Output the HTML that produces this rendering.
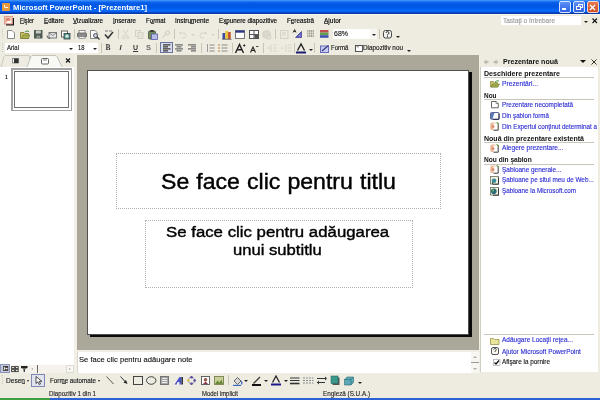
<!DOCTYPE html>
<html><head><meta charset="utf-8">
<style>
*{margin:0;padding:0;box-sizing:border-box}
html,body{width:600px;height:400px;overflow:hidden;background:#EEECE1;font-family:"Liberation Sans",sans-serif;position:relative}
.a{position:absolute}
.t{position:absolute;white-space:nowrap;transform-origin:0 0;line-height:1}
svg{position:absolute;overflow:visible}
.sep{position:absolute;width:1px;background:#C8C5B6}
.grip{position:absolute;width:1px;background:repeating-linear-gradient(#CAC8BA 0 1px,transparent 1px 2px)}
.arr{position:absolute;width:0;height:0;border-left:2px solid transparent;border-right:2px solid transparent;border-top:2px solid #222}
#wrap{position:absolute;left:0;top:0;width:600px;height:400px;overflow:hidden;filter:blur(0.35px)}
</style></head><body><div id="wrap">
<!-- TITLE BAR -->
<div class="a" style="left:0;top:0;width:600px;height:14px;background:linear-gradient(#4A9CFF 0,#2A80FA 1px,#0A60EA 2.5px,#0057E4 5px,#0058E6 8px,#0868F8 10px,#0A6AFA 11.2px,#0448C8 12.5px,#0A3AA8 13.5px,#8A9AD0 14px)"></div>
<div class="a" style="left:2px;top:3px;width:8px;height:8px;background:#E99A3C;border-radius:1px"></div>
<div class="a" style="left:4px;top:5px;width:4px;height:3px;border-left:1px solid #fff;border-bottom:1px solid #fff;border-radius:0 0 0 2px"></div>
<div class="a" style="left:559px;top:1px;width:12px;height:11.5px;background:linear-gradient(#5C8FF5,#2F63E3);border:1px solid #D8E4FA;border-radius:2px"></div>
<div class="a" style="left:562px;top:8px;width:4px;height:2px;background:#fff"></div>
<div class="a" style="left:573px;top:1px;width:12px;height:11.5px;background:linear-gradient(#5C8FF5,#2F63E3);border:1px solid #D8E4FA;border-radius:2px"></div>
<div class="a" style="left:577.5px;top:3.5px;width:5px;height:4.5px;border:1px solid #fff;border-top-width:1.5px"></div>
<div class="a" style="left:575.5px;top:5.5px;width:5px;height:4.5px;border:1px solid #fff;border-top-width:1.5px;background:#3A6CE4"></div>
<div class="a" style="left:586.5px;top:1px;width:12px;height:11.5px;background:linear-gradient(#E9794F,#D14E26);border:1px solid #F1D6CB;border-radius:2px"></div>
<svg style="left:589px;top:3.5px" width="7" height="7"><path d="M1 1L6 6M6 1L1 6" stroke="#fff" stroke-width="1.4"/></svg>

<!-- MENU BAR -->
<div class="a" style="left:0;top:14px;width:600px;height:1px;background:#F6F5F0"></div>
<div class="a" style="left:20px;top:23.3px;width:3.5px;height:0.8px;background:#555"></div><div class="a" style="left:44px;top:23.3px;width:3.5px;height:0.8px;background:#555"></div><div class="a" style="left:73px;top:23.3px;width:4px;height:0.8px;background:#555"></div><div class="a" style="left:113px;top:23.3px;width:2px;height:0.8px;background:#555"></div><div class="a" style="left:151px;top:23.3px;width:2.5px;height:0.8px;background:#555"></div><div class="a" style="left:190px;top:23.3px;width:4px;height:0.8px;background:#555"></div><div class="a" style="left:224px;top:23.3px;width:3.5px;height:0.8px;background:#555"></div><div class="a" style="left:291px;top:23.3px;width:3px;height:0.8px;background:#555"></div><div class="a" style="left:324px;top:23.3px;width:4px;height:0.8px;background:#555"></div>
<svg style="left:4px;top:16px" width="11" height="10"><rect x="2" y="2" width="8" height="7.5" fill="#1A1A1A"/><rect x="0.5" y="0.5" width="8" height="7.5" fill="#F1C8B8" stroke="#D89080" stroke-width="0.8"/><rect x="1.8" y="2" width="4" height="3.5" fill="#E08870"/><rect x="3" y="5" width="4" height="2" fill="#fff"/></svg>
<div class="a" style="left:501px;top:15.5px;width:80px;height:9.5px;background:#fff"></div>
<div class="arr" style="left:583.5px;top:21px"></div>
<svg style="left:591.5px;top:17.5px" width="6" height="6"><path d="M0.5 0.5L5 5M5 0.5L0.5 5" stroke="#111" stroke-width="1.1"/></svg>

<!-- TOOLBAR 1 -->
<div class="grip" style="left:2px;top:29px;height:10px"></div>
<!-- new -->
<svg style="left:7px;top:30px" width="8" height="9"><path d="M0.5 0.5H5L7.5 3V8.5H0.5Z" fill="#fff" stroke="#8A8A8A"/></svg>
<!-- open -->
<svg style="left:20px;top:30px" width="10" height="9"><path d="M0.5 2.5H4L5 3.5H8.5V8.5H0.5Z" fill="#C9C060" stroke="#7A7630" stroke-width="0.8"/><path d="M1.5 8.5L3 5H9.8L8.5 8.5Z" fill="#A7B04A" stroke="#6E7430" stroke-width="0.6"/><path d="M5 2Q7 0 9 1.5" stroke="#3C8A3C" fill="none" stroke-width="1"/></svg>
<!-- save -->
<svg style="left:34px;top:30px" width="9" height="9"><rect x="0" y="0" width="8.5" height="8.5" fill="#4E5A52"/><rect x="1.8" y="0.5" width="5" height="3" fill="#C8CCC6"/><rect x="2.5" y="5.5" width="3.5" height="3" fill="#8E968F"/></svg>
<!-- email -->
<svg style="left:47px;top:31px" width="10" height="8"><rect x="2" y="1.5" width="7.5" height="5.5" fill="#E4E4E4" stroke="#6E6E6E" stroke-width="0.9"/><path d="M2 1.5L5.8 4.5L9.5 1.5" fill="none" stroke="#6E6E6E" stroke-width="0.8"/><path d="M0 4.5Q0 7.5 3 7.5" fill="none" stroke="#555" stroke-width="1"/></svg>
<!-- permission -->
<svg style="left:61px;top:30px" width="10" height="10"><rect x="0.5" y="1" width="6" height="6" fill="#fff" stroke="#555" stroke-width="0.9"/><rect x="3" y="3.5" width="6" height="5.5" fill="#4A9A98" stroke="#3A3A3A" stroke-width="0.8"/><circle cx="6" cy="6.2" r="1.6" fill="#D8E8E0"/></svg>
<div class="sep" style="left:73.5px;top:29px;height:10px"></div>
<!-- print -->
<svg style="left:77px;top:30px" width="10" height="9"><rect x="2" y="0.5" width="6" height="3" fill="#fff" stroke="#777" stroke-width="0.8"/><rect x="0.5" y="3" width="9" height="4" rx="1" fill="#8C8C8C" stroke="#5A5A5A" stroke-width="0.8"/><rect x="2" y="6.5" width="6" height="2" fill="#E8E8E8" stroke="#777" stroke-width="0.6"/></svg>
<!-- print preview -->
<svg style="left:90px;top:30px" width="10" height="10"><path d="M0.5 0.5H5L7 2.5V8.5H0.5Z" fill="#fff" stroke="#777" stroke-width="0.9"/><circle cx="5.5" cy="5.5" r="2" fill="#C8CCE8" stroke="#444" stroke-width="0.9"/><path d="M7 7L9.5 9.5" stroke="#333" stroke-width="1.3"/></svg>
<!-- spelling -->
<svg style="left:104px;top:30px" width="10" height="9"><path d="M1 1H4M5 1H8" stroke="#777" stroke-width="1"/><path d="M1 4.5L4 8L9 2" fill="none" stroke="#333" stroke-width="1.5"/></svg>
<div class="sep" style="left:117.5px;top:29px;height:10px"></div>
<!-- cut disabled -->
<svg style="left:122px;top:30px" width="8" height="9"><path d="M1 0L6 7M6 0L1 7" stroke="#D4D2C6" stroke-width="1"/><circle cx="1.5" cy="7.5" r="1.2" fill="none" stroke="#D4D2C6"/><circle cx="5.5" cy="7.5" r="1.2" fill="none" stroke="#D4D2C6"/></svg>
<!-- copy disabled -->
<svg style="left:135px;top:30px" width="9" height="9"><rect x="0.5" y="0.5" width="5" height="6" fill="none" stroke="#D4D2C6"/><rect x="3" y="2.5" width="5" height="6" fill="#E6E4DA" stroke="#D4D2C6"/></svg>
<!-- paste -->
<svg style="left:148px;top:30px" width="10" height="10"><rect x="0.5" y="1" width="7" height="8" rx="1" fill="#6E8A5A" stroke="#4A5A3E" stroke-width="0.8"/><rect x="2.5" y="0" width="3" height="2" fill="#333"/><rect x="3.5" y="4" width="6" height="5.5" fill="#B8BCE8" stroke="#5A5EA8" stroke-width="0.8"/></svg>
<!-- format painter disabled -->
<svg style="left:161px;top:30px" width="10" height="9"><path d="M1 8L5 4M4 3L7 0.5L9 2.5L6.5 5Z" fill="none" stroke="#D4D2C6" stroke-width="1.1"/></svg>
<div class="sep" style="left:173.5px;top:29px;height:10px"></div>
<!-- undo/redo disabled -->
<svg style="left:179px;top:31px" width="8" height="7"><path d="M1 2H5Q7 2 7 4.5T5 7H3" fill="none" stroke="#D6D4C8" stroke-width="1"/><path d="M0 2L2 0V4Z" fill="#D6D4C8"/></svg>
<div class="arr" style="left:191px;top:34px;border-top-color:#D6D4C8"></div>
<svg style="left:199px;top:31px" width="8" height="7"><path d="M7 2H3Q1 2 1 4.5T3 7H5" fill="none" stroke="#D6D4C8" stroke-width="1"/><path d="M8 2L6 0V4Z" fill="#D6D4C8"/></svg>
<div class="arr" style="left:211px;top:34px;border-top-color:#D6D4C8"></div>
<div class="sep" style="left:217.5px;top:29px;height:10px"></div>
<!-- chart -->
<svg style="left:222px;top:30px" width="10" height="10"><rect x="0.5" y="3" width="2.6" height="6" fill="#3A4AA0"/><rect x="3.3" y="1" width="2.6" height="8" fill="#E8C030"/><rect x="6.1" y="2" width="2.6" height="7" fill="#C0502A"/><path d="M0 9.3H9.5" stroke="#555" stroke-width="0.8"/></svg>
<!-- table window -->
<svg style="left:235px;top:30px" width="10" height="9"><rect x="0.5" y="0.5" width="9" height="8" fill="#fff" stroke="#6A6A6A" stroke-width="0.9"/><rect x="0.5" y="0.5" width="9" height="2.2" fill="#2A3A8A"/></svg>
<!-- insert table -->
<svg style="left:249px;top:30px" width="10" height="9"><rect x="0.5" y="0.5" width="9" height="8" fill="#fff" stroke="#555" stroke-width="1"/><path d="M5 0.5V8.5M0.5 4.5H9.5" stroke="#555" stroke-width="1"/><rect x="5.5" y="5" width="4" height="3.5" fill="#555"/></svg>
<!-- globe disabled -->
<svg style="left:262px;top:30px" width="10" height="10"><circle cx="4.5" cy="4.5" r="4" fill="#DAD8CC" stroke="#D4D2C6"/><circle cx="7" cy="7.5" r="2" fill="#E2E0D4" stroke="#D4D2C6" stroke-width="0.8"/></svg>
<div class="sep" style="left:275px;top:29px;height:10px"></div>
<!-- expand disabled -->
<svg style="left:280px;top:30px" width="9" height="9"><rect x="0.5" y="0.5" width="7.5" height="8" fill="none" stroke="#D3D1C5"/><path d="M2 3H6M2 5H6" stroke="#D3D1C5"/></svg>
<!-- show formatting -->
<svg style="left:292px;top:29px" width="11" height="10"><path d="M1.2 3.5L2.6 0.5L4 3.5M1.7 2.5H3.5" fill="none" stroke="#222" stroke-width="0.9"/><path d="M3.5 8.5L9.5 2.5V8.5Z" fill="#5A5AC0" stroke="#3A3A8A" stroke-width="0.7"/><path d="M6.5 7.2L8.3 5.4V7.2Z" fill="#C8C8F0"/></svg>
<!-- grid -->
<svg style="left:307px;top:29.5px" width="8" height="8"><path d="M0.8 0V7M2.6 0V7M4.4 0V7M6.2 0V7" stroke="#9E9C8E" stroke-width="1.2"/><path d="M0 2.3H7M0 4.7H7" stroke="#EEECE1" stroke-width="0.6"/></svg>
<!-- color/grayscale -->
<svg style="left:320px;top:30px" width="9" height="8"><rect x="0" y="0" width="8.5" height="2.6" fill="#C05050"/><rect x="0" y="2.6" width="8.5" height="2.6" fill="#60A050"/><rect x="0" y="5.2" width="8.5" height="2.6" fill="#4050B0"/></svg>
<!-- zoom combo -->
<div class="a" style="left:332.5px;top:28.7px;width:37px;height:10.5px;background:#fff"></div><div class="a" style="left:369.5px;top:28.7px;width:7px;height:10.5px;background:#F7F6F2"></div>
<div class="arr" style="left:371.5px;top:34px"></div>
<div class="sep" style="left:378.5px;top:29px;height:10px"></div>
<!-- help -->
<svg style="left:383px;top:30px" width="10" height="9"><rect x="0.5" y="0.5" width="8" height="7.5" rx="2" fill="#F4F4F0" stroke="#333" stroke-width="0.9"/><path d="M3 3Q3 1.6 4.5 1.6T6 3Q6 4 4.5 4.6V5.5" fill="none" stroke="#222" stroke-width="0.9"/><rect x="4" y="6.2" width="1" height="1" fill="#222"/></svg>
<div class="arr" style="left:395.5px;top:36px"></div>

<!-- TOOLBAR 2 -->
<div class="grip" style="left:2px;top:43px;height:10px"></div>
<div class="a" style="left:4.5px;top:42.5px;width:69px;height:10px;background:#fff"></div>
<div class="arr" style="left:68.5px;top:47.5px"></div>
<div class="a" style="left:74px;top:42.5px;width:24px;height:10px;background:#fff"></div>
<div class="arr" style="left:92.5px;top:47.5px"></div>
<div class="sep" style="left:100.5px;top:43px;height:10px"></div>
<div class="t" style="left:105.5px;top:44px;font-size:7.5px;font-weight:bold;color:#3A3A3A;font-family:'Liberation Serif'">B</div>
<div class="t" style="left:119.5px;top:44px;font-size:7.5px;font-style:italic;font-weight:bold;color:#3A3A3A">I</div>
<div class="t" style="left:133px;top:44px;font-size:7px;font-weight:bold;color:#3A3A3A;text-decoration:underline">U</div>
<div class="t" style="left:146px;top:44px;font-size:7.5px;font-weight:bold;color:#6A6A6A">S</div>
<div class="sep" style="left:156px;top:43px;height:10px"></div>
<div class="a" style="left:160px;top:42px;width:12.5px;height:11px;background:#DADBE8;border:1px solid #6A73A0"></div>
<svg style="left:162.5px;top:44px" width="8" height="8"><path d="M0 0.8H7.5M0 2.8H5M0 4.8H7.5M0 6.8H5" stroke="#3A3A3A" stroke-width="1.3"/></svg>
<svg style="left:175px;top:44px" width="9" height="8"><path d="M0 0.8H8M1.5 2.8H6.5M0 4.8H8M1.5 6.8H6.5" stroke="#6E6E6E" stroke-width="1.3"/></svg>
<svg style="left:188px;top:44px" width="9" height="8"><path d="M0 0.8H8M3 2.8H8M0 4.8H8M3 6.8H8" stroke="#6E6E6E" stroke-width="1.3"/></svg>
<div class="sep" style="left:201px;top:43px;height:10px"></div>
<svg style="left:207px;top:44px" width="8" height="8"><path d="M0.5 0V8" stroke="#999" stroke-width="1"/><path d="M2.5 1H7.5M2.5 4H7.5M2.5 7H7.5" stroke="#8A8A8A" stroke-width="1"/></svg>
<svg style="left:218px;top:44px" width="10" height="8"><path d="M0 1H2M0 4H2M0 7H2" stroke="#C08030" stroke-width="1.2"/><path d="M3.5 1H9.5M3.5 4H9.5M3.5 7H9.5" stroke="#8A8A8A" stroke-width="1"/></svg>
<div class="sep" style="left:231.5px;top:43px;height:10px"></div>
<svg style="left:235px;top:42.5px" width="11" height="11"><path d="M0.5 10L4.5 1.5L8.5 10M2.2 6.8H6.8" fill="none" stroke="#222" stroke-width="1.4"/><path d="M8 2.5H10.5M9.25 1.2V3.8" stroke="#222" stroke-width="0.8"/></svg>
<svg style="left:250px;top:44.5px" width="9" height="8"><path d="M0.5 7.5L3 2L5.5 7.5M1.5 5.5H4.5" fill="none" stroke="#222" stroke-width="1.1"/><path d="M6 1.5H8.5" stroke="#222" stroke-width="0.8"/></svg>
<div class="sep" style="left:263px;top:43px;height:10px"></div>
<svg style="left:267px;top:44px" width="11" height="9"><path d="M4 0.5V8M6 1H10M6 4H10M6 7H10M3 4H0" stroke="#D6D4C8" stroke-width="1"/></svg>
<svg style="left:281px;top:44px" width="11" height="9"><path d="M5 0.5V8M7 1H10.5M7 4H10.5M7 7H10.5M0 4H3" stroke="#D6D4C8" stroke-width="1"/></svg>
<div class="sep" style="left:293.5px;top:43px;height:10px"></div>
<svg style="left:296px;top:42.5px" width="11" height="11"><path d="M1.5 7.5L5 1L8.5 7.5" fill="none" stroke="#222" stroke-width="1.4"/><rect x="0" y="8.5" width="10" height="2" fill="#1A1A70"/></svg>
<div class="arr" style="left:308.5px;top:48.5px"></div>
<div class="sep" style="left:313.5px;top:43px;height:10px"></div>
<svg style="left:320px;top:44.5px" width="10" height="8"><rect x="0.5" y="1" width="8" height="6.5" fill="#C8CCF0" stroke="#5A5EB0" stroke-width="0.9"/><path d="M2 6L8.5 0.5" stroke="#3A3A8A" stroke-width="1.2"/></svg>
<svg style="left:355px;top:44.5px" width="8" height="7"><rect x="0.5" y="0.5" width="7" height="6" fill="#fff" stroke="#444" stroke-width="0.9"/><path d="M1.5 1.8H4" stroke="#666" stroke-width="0.8"/></svg>
<div class="arr" style="left:406.5px;top:50px"></div>
<!-- toolbar end shadow -->

<!-- LEFT PANEL -->
<div class="a" style="left:0;top:55px;width:74px;height:309.5px;background:#fff"></div>
<div class="a" style="left:0;top:55px;width:74px;height:12px;background:#EEECE1"></div>
<!-- tabs -->
<svg style="left:0;top:55px" width="74" height="12"><path d="M1 12L4 1.5Q4.5 0.5 6 0.5H29L33 12" fill="#EDEBE2" stroke="#C4C2B4" stroke-width="0.8"/><path d="M27 12L31 1.5Q31.5 0.5 33 0.5H55Q56.5 0.5 57 1.5L62 12" fill="#F8F8F4" stroke="#B8B6A8" stroke-width="0.8"/><rect x="12.5" y="3.5" width="6" height="4.5" fill="#fff" stroke="#777" stroke-width="0.8"/><rect x="14" y="3.5" width="4.5" height="4.5" fill="#333"/><rect x="41.5" y="3.5" width="7" height="5.5" rx="1" fill="#fff" stroke="#555" stroke-width="0.9"/><path d="M43 5H47" stroke="#555" stroke-width="0.7"/><path d="M66 3.5L70 7.5M70 3.5L66 7.5" stroke="#111" stroke-width="1.1"/></svg>
<div class="a" style="left:74px;top:55px;width:3px;height:318px;background:#F2F0E6"></div>
<!-- thumbnail -->
<div class="a" style="left:11px;top:68px;width:60.5px;height:43px;border-style:solid;border-color:#A2A2A2;border-width:2px 1.3px 1.3px 2px;background:#fff"></div>
<div class="a" style="left:14px;top:71px;width:54.5px;height:37px;border:1px solid #707070;background:#fff"></div>
<div class="t" style="left:4.6px;top:74.2px;font-size:6.2px;font-weight:bold;color:#111;transform:scaleX(0.8)">1</div>
<!-- view buttons row -->
<div class="a" style="left:0;top:364.5px;width:74px;height:8.5px;background:#F4F2EA"></div>
<div class="a" style="left:0;top:364px;width:9.5px;height:9px;background:#C4C9DE;border:1px solid #8D95B8"></div>
<svg style="left:2.5px;top:366.3px" width="6" height="6"><rect x="0" y="0" width="5.2" height="4.8" fill="#333"/><rect x="0.8" y="0.8" width="1" height="3.2" fill="#fff"/><rect x="2.5" y="1.8" width="2" height="1.4" fill="#fff"/></svg>
<svg style="left:11px;top:365.8px" width="8" height="6"><rect x="0.6" y="0.6" width="2.8" height="2" fill="#fff" stroke="#444" stroke-width="1"/><rect x="4.4" y="0.6" width="2.8" height="2" fill="#fff" stroke="#444" stroke-width="1"/><rect x="0.6" y="3.6" width="2.8" height="2" fill="#fff" stroke="#444" stroke-width="1"/><rect x="4.4" y="3.6" width="2.8" height="2" fill="#fff" stroke="#444" stroke-width="1"/></svg>
<svg style="left:20.5px;top:365.8px" width="7" height="6"><rect x="0" y="0" width="6.5" height="2.2" fill="#222"/><path d="M1 2.2L3.25 4.2L5.5 2.2Z" fill="#555"/><path d="M3.25 3.5V6" stroke="#222" stroke-width="1.2"/></svg>
<div class="a" style="left:31px;top:368px;width:0;height:0;border-top:1.5px solid transparent;border-bottom:1.5px solid transparent;border-right:2px solid #AAA"></div>
<div class="a" style="left:37px;top:365px;width:1px;height:8px;background:#666"></div>
<div class="a" style="left:65.5px;top:364.8px;width:8px;height:8px;border:1px solid #DDDBD0;background:#F8F7F3"></div><div class="a" style="left:69px;top:368px;width:0;height:0;border-top:1.5px solid transparent;border-bottom:1.5px solid transparent;border-left:2px solid #AAA"></div>

<!-- SLIDE AREA -->
<div class="a" style="left:77px;top:55px;width:402px;height:295px;background:#ABA899"></div>
<div class="a" style="left:89.5px;top:72px;width:382px;height:264.8px;background:#0A0A0A"></div>
<div class="a" style="left:87px;top:70px;width:382px;height:265px;background:#fff;border:1px solid #505050"></div>
<!-- placeholders -->
<div class="a" style="left:115.5px;top:152.5px;width:325.5px;height:56px;border:1px dotted #B0B0B0"></div>
<div class="a" style="left:144.5px;top:220px;width:268px;height:67.5px;border:1px dotted #B0B0B0"></div>
<div class="a" style="left:479px;top:55px;width:1px;height:318px;background:#F2F0E6"></div>

<!-- NOTES -->
<div class="a" style="left:77px;top:350px;width:401px;height:2px;background:#F0EEE4"></div>
<div class="a" style="left:77px;top:351.5px;width:401px;height:1px;background:repeating-linear-gradient(90deg,#D8D6CC 0 1px,transparent 1px 2px)"></div>
<div class="a" style="left:77px;top:352px;width:401px;height:21px;background:#fff;border-left:1px solid #D8D6CC"></div>
<div class="a" style="left:470.5px;top:352px;width:8px;height:21px;background:#F7F6F1"></div>
<div class="a" style="left:472.5px;top:356px;width:0;height:0;border-left:2px solid transparent;border-right:2px solid transparent;border-bottom:2px solid #B0AEA2"></div>
<div class="a" style="left:470.5px;top:361.5px;width:8px;height:1px;background:#999"></div>
<div class="a" style="left:472.5px;top:368px;width:0;height:0;border-left:2px solid transparent;border-right:2px solid transparent;border-top:2px solid #B0AEA2"></div>

<!-- TASK PANE -->
<div class="a" style="left:480px;top:55px;width:118px;height:317px;background:#fff;border-left:1px solid #D0CEC2"></div>
<div class="a" style="left:480px;top:55px;width:118px;height:12.2px;background:#EEECE1"></div>
<svg style="left:483px;top:58.5px" width="18" height="6"><path d="M0.5 3L3.5 0.3V5.7Z" fill="#BDBBAE"/><rect x="3" y="2" width="2.5" height="2" fill="#BDBBAE"/><path d="M15.5 3L12.5 0.3V5.7Z" fill="#BDBBAE"/><rect x="10.5" y="2" width="2.5" height="2" fill="#BDBBAE"/></svg>
<div class="a" style="left:580px;top:59.5px;width:0;height:0;border-left:3px solid transparent;border-right:3px solid transparent;border-top:3.5px solid #111"></div>
<svg style="left:591px;top:58.5px" width="6" height="6"><path d="M0.5 0.5L5.5 5.5M5.5 0.5L0.5 5.5" stroke="#222" stroke-width="0.9"/></svg>
<div class="a" style="left:484px;top:77px;width:110px;height:1px;background:#C8C6BA"></div>
<div class="a" style="left:484px;top:98.5px;width:110px;height:1px;background:#C8C6BA"></div>
<div class="a" style="left:484px;top:142px;width:110px;height:1px;background:#C8C6BA"></div>
<div class="a" style="left:484px;top:163.5px;width:110px;height:1px;background:#C8C6BA"></div>
<div class="a" style="left:484px;top:334px;width:110px;height:1px;background:#C8C6BA"></div>
<!-- tp icons -->
<svg style="left:490px;top:80px" width="10" height="8"><path d="M0.5 1.5H3.5L4.5 2.5H7.5V7H0.5Z" fill="#C8C070" stroke="#8A8640" stroke-width="0.7"/><path d="M1 7L2.5 4H9.5L8 7Z" fill="#9EB04A" stroke="#6E7A30" stroke-width="0.6"/><path d="M5 2Q7 0 9 1" stroke="#3C8A3C" fill="none" stroke-width="0.9"/></svg>
<svg style="left:491px;top:101px" width="8" height="7"><path d="M0.5 0.5H5L7.3 2.5V6.8H0.5Z" fill="#fff" stroke="#555" stroke-width="0.9"/><path d="M5 0.5V2.5H7.3" fill="#E8F0D8" stroke="#555" stroke-width="0.6"/></svg>
<svg style="left:490px;top:111.8px" width="10" height="8"><rect x="0.5" y="0.5" width="8.5" height="6.8" rx="1" fill="#fff" stroke="#4A5080" stroke-width="0.9"/><path d="M0.8 0.8H4.5L2.5 7H0.8Z" fill="#5A78B8"/><path d="M9 1.5V7.3H3" fill="none" stroke="#2A2A4A" stroke-width="1"/></svg>
<svg style="left:490px;top:122.2px" width="10" height="9"><rect x="0.3" y="0.5" width="6" height="7.5" rx="1.5" fill="#EDBB9C"/><rect x="3.5" y="1.5" width="4.5" height="6.5" fill="#fff"/><path d="M8.2 1.5V8.2H3.5" fill="none" stroke="#3A3A3A" stroke-width="1"/><path d="M6.5 0.5L8.8 1.8" stroke="#5A9A40" stroke-width="1.2"/><circle cx="3" cy="4.5" r="1.5" fill="#D89070"/></svg>
<svg style="left:490px;top:144.2px" width="10" height="9"><rect x="0.3" y="0.5" width="6" height="7.5" rx="1.5" fill="#EDBB9C"/><rect x="3.5" y="1.5" width="4.5" height="6.5" fill="#fff"/><path d="M8.2 1.5V8.2H3.5" fill="none" stroke="#3A3A3A" stroke-width="1"/><path d="M6.5 0.5L8.8 1.8" stroke="#5A9A40" stroke-width="1.2"/><circle cx="3" cy="4.5" r="1.5" fill="#D89070"/></svg>
<svg style="left:490px;top:165px" width="10" height="9"><rect x="0.3" y="0.5" width="6" height="7.5" rx="1.5" fill="#EDBB9C"/><rect x="3.5" y="1.5" width="4.5" height="6.5" fill="#fff"/><path d="M8.2 1.5V8.2H3.5" fill="none" stroke="#3A3A3A" stroke-width="1"/><path d="M6.5 0.5L8.8 1.8" stroke="#5A9A40" stroke-width="1.2"/><circle cx="3" cy="4.5" r="1.5" fill="#D89070"/></svg>
<svg style="left:490px;top:175.8px" width="10" height="9"><rect x="0.5" y="0.5" width="8" height="7.5" fill="#F0F0E0" stroke="#6A7060" stroke-width="0.8"/><circle cx="4" cy="4.8" r="2.3" fill="#3A8A9A"/><path d="M2.5 8.5V6" stroke="#3A6A40" stroke-width="1"/><path d="M8.5 1.5V8.3H3" fill="none" stroke="#333" stroke-width="0.9"/></svg>
<svg style="left:490px;top:186.5px" width="10" height="9"><rect x="0.5" y="0.5" width="8" height="7.5" fill="#F0F0E0" stroke="#6A7060" stroke-width="0.8"/><circle cx="3.8" cy="4.3" r="2.8" fill="#2E6A7A"/><circle cx="3" cy="3.6" r="1.1" fill="#6AB060"/><path d="M8.5 1.5V8.3H3" fill="none" stroke="#333" stroke-width="0.9"/></svg>
<svg style="left:490px;top:336.5px" width="10" height="8"><path d="M0.5 1.5H3.5L4.5 2.5H9V7.5H0.5Z" fill="#E8E49A" stroke="#9A9450" stroke-width="0.8"/></svg>
<svg style="left:491px;top:347px" width="9" height="9"><rect x="0.5" y="0.5" width="7" height="7" rx="1.5" fill="#F8F8F0" stroke="#444" stroke-width="0.9"/><path d="M2.6 2.6Q2.6 1.5 4 1.5T5.4 2.6Q5.4 3.5 4 4V5" fill="none" stroke="#333" stroke-width="0.8"/></svg>
<svg style="left:493px;top:358.5px" width="8" height="7"><rect x="0.5" y="0.5" width="6.5" height="6" fill="#fff" stroke="#AAA" stroke-width="0.7"/><path d="M1.5 3.5L3 5L6 1.5" fill="none" stroke="#111" stroke-width="1.2"/></svg>

<!-- DRAWING TOOLBAR -->
<div class="grip" style="left:2px;top:375px;height:10px"></div>
<div class="a" style="left:26.5px;top:380px;width:0;height:0;border-left:1.5px solid transparent;border-right:1.5px solid transparent;border-top:2px solid #222"></div><div class="a" style="left:21.5px;top:382.8px;width:3px;height:0.8px;background:#555"></div><div class="a" style="left:62px;top:382.8px;width:4px;height:0.8px;background:#555"></div>
<div class="a" style="left:31px;top:374px;width:14px;height:12.5px;background:#E0E2EE;border:1px solid #7F87B4"></div>
<svg style="left:34.5px;top:376px" width="8" height="9"><path d="M1 0.5V7.5L2.8 5.8L4.3 8.5L5.5 8L4.2 5.3H6.8Z" fill="#fff" stroke="#222" stroke-width="0.8"/></svg>
<div class="a" style="left:97.5px;top:380px;width:0;height:0;border-left:1.5px solid transparent;border-right:1.5px solid transparent;border-top:2px solid #222"></div>
<svg style="left:106px;top:376px" width="8" height="9"><path d="M0.5 0.5L7.5 8" stroke="#555" stroke-width="1"/></svg>
<svg style="left:120px;top:376px" width="8" height="9"><path d="M0.5 0.5L6 6.5" stroke="#333" stroke-width="1"/><path d="M7.5 8L3.5 6.5L6 4Z" fill="#222"/></svg>
<svg style="left:132.5px;top:376px" width="10" height="9"><rect x="0.5" y="0.5" width="9" height="8" fill="none" stroke="#444" stroke-width="1"/></svg>
<svg style="left:146px;top:376px" width="11" height="9"><ellipse cx="5.2" cy="4.5" rx="4.7" ry="3.8" fill="none" stroke="#444" stroke-width="1"/></svg>
<svg style="left:160px;top:375.5px" width="9" height="9"><rect x="0.5" y="0.5" width="8" height="8" fill="#A6A6A6" stroke="#6A6A6A" stroke-width="0.9"/><path d="M2.5 2.5H6.5M2 4.5H7M2 6.5H7" stroke="#F0F0F0" stroke-width="1"/></svg>
<svg style="left:173.5px;top:375.5px" width="10" height="9"><path d="M0.5 8.5L5.5 1H7.5V8.5H5.5V6H3.5L2.5 8.5Z" fill="#4A52C8"/><rect x="7.5" y="1" width="1.5" height="7.5" fill="#333"/></svg>
<svg style="left:187px;top:375.5px" width="9" height="9"><circle cx="4.5" cy="4.5" r="3.2" fill="none" stroke="#8A8AB8" stroke-width="0.8"/><circle cx="4.5" cy="1.3" r="1.3" fill="#5A4A9A"/><circle cx="7.7" cy="4.5" r="1.3" fill="#5A4A9A"/><circle cx="4.5" cy="7.7" r="1.3" fill="#5A4A9A"/><circle cx="1.3" cy="4.5" r="1.3" fill="#D8C040"/></svg>
<svg style="left:201px;top:375.5px" width="9" height="9"><rect x="0.5" y="0.5" width="8" height="8" fill="#fff" stroke="#555" stroke-width="0.9"/><circle cx="4.5" cy="3.8" r="1.8" fill="#9A5A4A"/><path d="M2 8L4.5 5.5L7 8Z" fill="#8A3A4A"/></svg>
<svg style="left:214px;top:375.5px" width="10" height="9"><rect x="0.5" y="0.5" width="9" height="8" fill="#C8D098" stroke="#7A8050" stroke-width="0.9"/><path d="M1 8L3.5 4.5L5.5 6.5L7.5 3.5L9 8Z" fill="#6A8A3A"/></svg>
<div class="sep" style="left:228px;top:375px;height:10px"></div>
<svg style="left:232.5px;top:375.5px" width="10" height="10"><path d="M1 5L4.5 1.5L8 5L4.5 8.5Z" fill="#D8D8D8" stroke="#555" stroke-width="0.9"/><path d="M8 5Q9.5 7 8.5 8.5" stroke="#3A6AC0" stroke-width="1.3" fill="none"/><rect x="0" y="8.8" width="8" height="1.2" fill="#3A6AC0"/></svg>
<div class="arr" style="left:244px;top:380px"></div>
<svg style="left:252px;top:375.5px" width="10" height="10"><path d="M1.5 7.5L8 1" stroke="#444" stroke-width="1.5"/><rect x="0" y="8" width="9" height="2" fill="#111"/></svg>
<div class="arr" style="left:264px;top:380px"></div>
<svg style="left:271px;top:375px" width="10" height="11"><path d="M1.5 7.5L5 1L8.5 7.5" fill="none" stroke="#222" stroke-width="1.3"/><rect x="0" y="8.5" width="10" height="2" fill="#1A1A8A"/></svg>
<div class="arr" style="left:284px;top:380px"></div>
<svg style="left:290px;top:376.5px" width="10" height="8"><path d="M0 1H9.5M0 3.5H9.5" stroke="#333" stroke-width="1"/><path d="M0 6.5H9.5" stroke="#333" stroke-width="1.6"/></svg>
<svg style="left:303px;top:376.5px" width="11" height="8"><path d="M0 1H10.5M0 3.5H10.5M0 6H10.5" stroke="#888" stroke-width="1" stroke-dasharray="2 1"/></svg>
<svg style="left:317px;top:376px" width="10" height="9"><path d="M0 2.5H8M0 6.5H8" stroke="#333" stroke-width="1"/><path d="M8 0.5L10 2.5L8 4.5ZM2 4.5L0 6.5L2 8.5Z" fill="#333"/></svg>
<svg style="left:331px;top:375.5px" width="9" height="10"><rect x="1.5" y="1.5" width="7" height="7.5" fill="#555"/><rect x="0" y="0" width="7" height="7.5" fill="#3A9A8A" stroke="#2A6A60" stroke-width="0.6"/></svg>
<svg style="left:344px;top:375.5px" width="10" height="10"><path d="M0.5 3.5L3 1H9.5V6.5L7 9H0.5Z" fill="#5AA8B8" stroke="#2A6A70" stroke-width="0.6"/><path d="M0.5 3.5H7V9M7 3.5L9.5 1" fill="none" stroke="#2A6A70" stroke-width="0.6"/></svg>
<div class="arr" style="left:358px;top:382px"></div>

<!-- STATUS -->
<div class="a" style="left:0;top:387px;width:600px;height:11px;background:#EEECE1"></div>
<div class="a" style="left:0;top:398px;width:600px;height:2px;background:#2C62D8"></div>
<div class="a" style="left:0;top:398px;width:50px;height:2px;background:#3FA03F"></div>
<div class="t" style="left:13px;top:4.00px;font-size:7.8px;font-weight:bold;color:#fff;transform:scaleX(0.9819);">Microsoft PowerPoint - [Prezentare1]</div>
<div class="t" style="left:20px;top:18.00px;font-size:6.6px;font-weight:normal;color:#000;transform:scaleX(0.8682);-webkit-text-stroke:0.15px #000">Fişier</div>
<div class="t" style="left:44px;top:18.00px;font-size:6.6px;font-weight:normal;color:#000;transform:scaleX(0.9567);-webkit-text-stroke:0.15px #000">Editare</div>
<div class="t" style="left:73px;top:18.00px;font-size:6.6px;font-weight:normal;color:#000;transform:scaleX(0.9334);-webkit-text-stroke:0.15px #000">Vizualizare</div>
<div class="t" style="left:113px;top:18.00px;font-size:6.6px;font-weight:normal;color:#000;transform:scaleX(0.9503);-webkit-text-stroke:0.15px #000">Inserare</div>
<div class="t" style="left:145.6px;top:18.00px;font-size:6.6px;font-weight:normal;color:#000;transform:scaleX(0.9286);-webkit-text-stroke:0.15px #000">Format</div>
<div class="t" style="left:175px;top:18.00px;font-size:6.6px;font-weight:normal;color:#000;transform:scaleX(0.9762);-webkit-text-stroke:0.15px #000">Instrumente</div>
<div class="t" style="left:219px;top:18.00px;font-size:6.6px;font-weight:normal;color:#000;transform:scaleX(0.9474);-webkit-text-stroke:0.15px #000">Expunere diapozitive</div>
<div class="t" style="left:287px;top:18.00px;font-size:6.6px;font-weight:normal;color:#000;transform:scaleX(0.9568);-webkit-text-stroke:0.15px #000">Fereastră</div>
<div class="t" style="left:324px;top:18.00px;font-size:6.6px;font-weight:normal;color:#000;transform:scaleX(0.9864);-webkit-text-stroke:0.15px #000">Ajutor</div>
<div class="t" style="left:503px;top:18.00px;font-size:6.6px;font-weight:normal;color:#9a9a9a;transform:scaleX(0.9852);-webkit-text-stroke:0.12px #9a9a9a">Tastaţi o întrebare</div>
<div class="t" style="left:333.5px;top:31.00px;font-size:6.8px;font-weight:normal;color:#111;transform:scaleX(1.0287);-webkit-text-stroke:0.12px #111">68%</div>
<div class="t" style="left:7px;top:45.00px;font-size:6.8px;font-weight:normal;color:#111;transform:scaleX(0.8817);-webkit-text-stroke:0.12px #111">Arial</div>
<div class="t" style="left:77.5px;top:45.00px;font-size:6.8px;font-weight:normal;color:#111;transform:scaleX(0.8595);-webkit-text-stroke:0.12px #111">18</div>
<div class="t" style="left:330.5px;top:45.00px;font-size:6.6px;font-weight:normal;color:#111;transform:scaleX(0.9180);-webkit-text-stroke:0.12px #111">Formă</div>
<div class="t" style="left:363px;top:45.00px;font-size:6.6px;font-weight:normal;color:#111;transform:scaleX(0.9657);-webkit-text-stroke:0.12px #111">Diapozitiv nou</div>
<div class="t" style="left:161.4px;top:172.00px;font-size:21.3px;font-weight:normal;color:#000;transform:scaleX(1.0842);-webkit-text-stroke:0.4px #000;word-spacing:0.6px">Se face clic pentru titlu</div>
<div class="t" style="left:166.0px;top:224.00px;font-size:15.5px;font-weight:normal;color:#000;transform:scaleX(1.0837);-webkit-text-stroke:0.4px #000">Se face clic pentru adăugarea</div>
<div class="t" style="left:233.1px;top:242.00px;font-size:15.5px;font-weight:normal;color:#000;transform:scaleX(1.0721);-webkit-text-stroke:0.4px #000">unui subtitlu</div>
<div class="t" style="left:78.5px;top:356.00px;font-size:7.6px;font-weight:normal;color:#111;transform:scaleX(0.9994);-webkit-text-stroke:0.12px #111">Se face clic pentru adăugare note</div>
<div class="t" style="left:502.8px;top:58.00px;font-size:7.0px;font-weight:bold;color:#111;transform:scaleX(1.0098);">Prezentare nouă</div>
<div class="t" style="left:484px;top:70.00px;font-size:7.0px;font-weight:bold;color:#111;transform:scaleX(1.0121);">Deschidere prezentare</div>
<div class="t" style="left:502.2px;top:81.00px;font-size:6.8px;font-weight:normal;color:#2A2AD4;transform:scaleX(0.9821);-webkit-text-stroke:0.12px #2A2AD4">Prezentări...</div>
<div class="t" style="left:484.2px;top:92.00px;font-size:7.0px;font-weight:bold;color:#111;transform:scaleX(0.9185);">Nou</div>
<div class="t" style="left:502.2px;top:102.00px;font-size:6.8px;font-weight:normal;color:#2A2AD4;transform:scaleX(0.9348);-webkit-text-stroke:0.12px #2A2AD4">Prezentare necompletată</div>
<div class="t" style="left:502.2px;top:113.00px;font-size:6.8px;font-weight:normal;color:#2A2AD4;transform:scaleX(0.9146);-webkit-text-stroke:0.12px #2A2AD4">Din şablon formă</div>
<div class="t" style="left:502.2px;top:124.00px;font-size:6.8px;font-weight:normal;color:#2A2AD4;transform:scaleX(0.9278);-webkit-text-stroke:0.12px #2A2AD4">Din Expertul conţinut determinat a</div>
<div class="t" style="left:484px;top:135.00px;font-size:7.0px;font-weight:bold;color:#111;transform:scaleX(1.0041);">Nouă din prezentare existentă</div>
<div class="t" style="left:502.2px;top:145.00px;font-size:6.8px;font-weight:normal;color:#2A2AD4;transform:scaleX(0.9687);-webkit-text-stroke:0.12px #2A2AD4">Alegere prezentare...</div>
<div class="t" style="left:484px;top:156.00px;font-size:7.0px;font-weight:bold;color:#111;transform:scaleX(0.9434);">Nou din şablon</div>
<div class="t" style="left:502.2px;top:167.00px;font-size:6.8px;font-weight:normal;color:#2A2AD4;transform:scaleX(0.9484);-webkit-text-stroke:0.12px #2A2AD4">Şabloane generale...</div>
<div class="t" style="left:502.2px;top:177.00px;font-size:6.8px;font-weight:normal;color:#2A2AD4;transform:scaleX(0.9350);-webkit-text-stroke:0.12px #2A2AD4">Şabloane pe situl meu de Web...</div>
<div class="t" style="left:502.2px;top:188.00px;font-size:6.8px;font-weight:normal;color:#2A2AD4;transform:scaleX(0.9239);-webkit-text-stroke:0.12px #2A2AD4">Şabloane la Microsoft.com</div>
<div class="t" style="left:502.2px;top:337.00px;font-size:6.8px;font-weight:normal;color:#2A2AD4;transform:scaleX(0.9586);-webkit-text-stroke:0.12px #2A2AD4">Adăugare Locaţii reţea...</div>
<div class="t" style="left:502.2px;top:349.00px;font-size:6.8px;font-weight:normal;color:#2A2AD4;transform:scaleX(0.9397);-webkit-text-stroke:0.12px #2A2AD4">Ajutor Microsoft PowerPoint</div>
<div class="t" style="left:502.2px;top:359.00px;font-size:6.8px;font-weight:normal;color:#111;transform:scaleX(0.9340);-webkit-text-stroke:0.12px #111">Afişare la pornire</div>
<div class="t" style="left:6px;top:378.00px;font-size:6.8px;font-weight:normal;color:#111;transform:scaleX(0.9666);-webkit-text-stroke:0.12px #111">Desen</div>
<div class="t" style="left:50px;top:378.00px;font-size:6.8px;font-weight:normal;color:#111;transform:scaleX(0.9223);-webkit-text-stroke:0.12px #111">Forme automate</div>
<div class="t" style="left:49px;top:391.00px;font-size:6.6px;font-weight:normal;color:#222;transform:scaleX(0.9359);-webkit-text-stroke:0.12px #222">Diapozitiv 1 din 1</div>
<div class="t" style="left:202px;top:391.00px;font-size:6.6px;font-weight:normal;color:#222;transform:scaleX(0.9011);-webkit-text-stroke:0.12px #222">Model implicit</div>
<div class="t" style="left:323px;top:391.00px;font-size:6.6px;font-weight:normal;color:#222;transform:scaleX(0.9570);-webkit-text-stroke:0.12px #222">Engleză (S.U.A.)</div>
</div></body></html>
